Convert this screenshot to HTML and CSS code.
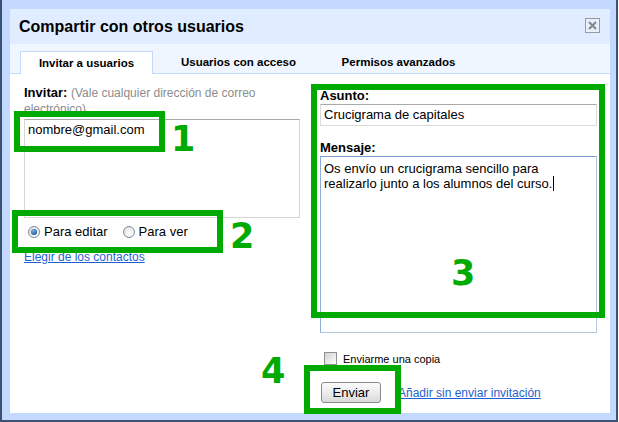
FILE: index.html
```html
<!DOCTYPE html>
<html lang="es">
<head>
<meta charset="utf-8">
<title>Compartir con otros usuarios</title>
<link rel="stylesheet" href="styles.css">
</head>
<body>
<div class="frame">
  <div class="dialog">
    <div class="header">
      <div class="title">Compartir con otros usuarios</div>
      <div class="close">
        <svg width="13" height="13" viewBox="0 0 13 13"><path d="M3 3 L10 10 M10 3 L3 10" stroke="#8a8a8a" stroke-width="2.2" fill="none"/></svg>
      </div>
    </div>
    <div class="tabs">
      <div class="tab tab-active">Invitar a usuarios</div>
      <div class="tab tab-second">Usuarios con acceso</div>
      <div class="tab tab-third">Permisos avanzados</div>
    </div>
    <div class="content">
      <div class="col-left">
        <div class="invite-label">
          <div class="label-line"><b>Invitar:</b> <span class="hint">(Vale cualquier dirección de correo</span></div>
          <div class="label-line hint">electrónico)</div>
        </div>
        <div class="invite-box">nombre@gmail.com</div>
        <div class="radio-row">
          <span class="radio radio-on"></span><span class="radio-text">Para editar</span>
          <span class="radio radio-second"></span><span class="radio-text">Para ver</span>
        </div>
        <a class="link contacts-link" href="#">Elegir de los contactos</a>
      </div>
      <div class="col-right">
        <div class="field-label">Asunto:</div>
        <div class="subject">Crucigrama de capitales</div>
        <div class="field-label message-label">Mensaje:</div>
        <div class="message">Os envío un crucigrama sencillo para<br>realizarlo junto a los alumnos del curso.<span class="caret"></span></div>
        <div class="check-row">
          <span class="checkbox"></span><span class="check-text">Enviarme una copia</span>
        </div>
        <div class="button-row">
          <span class="button">Enviar</span>
          <a class="link add-link" href="#">Añadir sin enviar invitación</a>
        </div>
      </div>
    </div>
  </div>
</div>

<div class="mark mark-1"></div>
<div class="mark mark-2"></div>
<div class="mark mark-3"></div>
<div class="mark mark-4"></div>
<div class="num num-1">1</div>
<div class="num num-2">2</div>
<div class="num num-3">3</div>
<div class="num num-4">4</div>
</body>
</html>
```

FILE: styles.css
```css
* { box-sizing: border-box; }

html, body {
  margin: 0;
  padding: 0;
  background: #ffffff;
}

body {
  position: relative;
  width: 619px;
  height: 422px;
  overflow: hidden;
  font-family: "Liberation Sans", Arial, sans-serif;
  color: #000;
}

.frame {
  width: 618px;
  height: 422px;
  background: #c3d9ff;
  border-left: 2px solid #3b5272;
  border-right: 2px solid #3b5272;
  border-bottom: 2px solid #3b5272;
  padding: 9px 6px 7px 8px;
}

.dialog {
  width: 600px;
  height: 404px;
  background: #fff;
  display: flex;
  flex-direction: column;
}

.header {
  height: 35px;
  background: #e0ecff;
  display: flex;
  justify-content: space-between;
  align-items: flex-start;
  padding: 0 10px 0 9px;
}

.title {
  font-size: 16px;
  font-weight: bold;
  line-height: 35px;
}

.close {
  width: 15px;
  height: 15px;
  margin-top: 9px;
  border: 1px solid #9a9a9a;
  display: flex;
  align-items: center;
  justify-content: center;
  background: #e8f0fd;
}

.close svg { display: block; }

.tabs {
  height: 30px;
  background: #f0f6ff;
  border-bottom: 1px solid #c3d9ff;
  display: flex;
  align-items: flex-end;
  padding-left: 10px;
}

.tab {
  height: 23px;
  line-height: 22px;
  margin-bottom: -1px;
  font-size: 11.5px;
  font-weight: bold;
  text-align: center;
  color: #000;
}

.tab-active {
  width: 133px;
  background: #fff;
  border: 1px solid #c3d9ff;
  border-bottom: none;
}

.tab-second {
  width: 153px;
  margin-left: 9px;
}

.tab-third {
  width: 153px;
  margin-left: 7px;
}

.content {
  flex: 1;
  display: flex;
  gap: 20px;
  padding: 11px 13px 0 14px;
}

.col-left {
  width: 276px;
  display: flex;
  flex-direction: column;
  align-items: flex-start;
}

.invite-label {
  font-size: 13px;
  line-height: 16px;
  height: 32px;
}

.label-line {
  height: 16px;
  white-space: nowrap;
}

.hint {
  color: #8c8c8c;
  font-size: 12px;
}

.invite-box {
  width: 276px;
  height: 99px;
  margin-top: 2px;
  border: 1px solid #d6d6d6;
  border-top-color: #a8a8a8;
  padding: 2px 3px;
  font-size: 13px;
  line-height: 16px;
}

.radio-row {
  margin-top: 6px;
  height: 16px;
  display: flex;
  align-items: center;
  font-size: 13px;
}

.radio {
  width: 12px;
  height: 12px;
  border-radius: 50%;
  border: 1px solid #7c8ca3;
  background: radial-gradient(circle at 60% 65%, #ffffff 0%, #e2e2e2 80%);
  margin-left: 4px;
  margin-right: 4px;
  position: relative;
}

.radio-on::after {
  content: "";
  position: absolute;
  left: 2px;
  top: 2px;
  width: 6px;
  height: 6px;
  border-radius: 50%;
  background: radial-gradient(circle at 40% 35%, #7fb2e6 0%, #1f5a94 70%, #123a66 100%);
}

.radio-second {
  margin-left: 15px;
}

.radio-text {
  line-height: 16px;
}

.link {
  color: #1f5fcf;
  text-decoration: underline;
  font-size: 12px;
  line-height: 16px;
}

.contacts-link {
  margin-top: 9px;
}

.col-right {
  width: 277px;
  padding-top: 3px;
  display: flex;
  flex-direction: column;
  align-items: flex-start;
}

.field-label {
  font-size: 13px;
  font-weight: bold;
  line-height: 16px;
}

.subject {
  width: 277px;
  height: 22px;
  border: 1px solid #dadada;
  border-top-color: #aaaaaa;
  padding: 0 3px;
  font-size: 13px;
  line-height: 20px;
}

.message-label {
  margin-top: 14px;
}

.message {
  width: 277px;
  height: 177px;
  border: 1px solid #b4c8e2;
  border-top-color: #7d9ed0;
  border-left-color: #8fadd8;
  padding: 4px 3px;
  font-size: 13px;
  line-height: 15px;
}

.caret {
  display: inline-block;
  width: 1px;
  height: 15px;
  background: #000;
  vertical-align: -3px;
  margin-left: 1px;
}

.check-row {
  margin-top: 17px;
  height: 16px;
  display: flex;
  align-items: center;
}

.checkbox {
  width: 13px;
  height: 13px;
  margin-left: 4px;
  border: 1px solid #8e9092;
  background: linear-gradient(135deg, #d4d4d4 0%, #f4f4f4 80%, #ffffff 100%);
}

.check-text {
  margin-left: 6px;
  font-size: 11px;
  line-height: 16px;
  padding-top: 2px;
}

.button-row {
  margin-top: 16px;
  display: flex;
  align-items: center;
}

.button {
  margin-left: 1px;
  width: 60px;
  height: 21px;
  border: 1px solid #8a8a8a;
  border-radius: 3px;
  background: linear-gradient(#fbfbfb 0%, #ececec 50%, #dadada 100%);
  font-size: 13px;
  line-height: 19px;
  text-align: center;
}

.add-link {
  margin-left: 17px;
}

/* annotation overlays */
.mark {
  position: absolute;
  border: 6px solid #00aa00;
}

.mark-1 { left: 14px; top: 111px; width: 151px; height: 41px; }
.mark-2 { left: 12px; top: 210px; width: 211px; height: 43px; }
.mark-3 { left: 311px; top: 84px; width: 294px; height: 234px; }
.mark-4 { left: 304px; top: 365px; width: 97px; height: 49px; }

.num {
  position: absolute;
  font-family: "DejaVu Sans", Verdana, sans-serif;
  font-weight: bold;
  font-size: 35px;
  line-height: 1;
  color: #00aa00;
}

.num-1 { left: 171px; top: 122px; }
.num-2 { left: 230px; top: 219px; }
.num-3 { left: 451px; top: 256px; }
.num-4 { left: 261px; top: 354px; }
```
